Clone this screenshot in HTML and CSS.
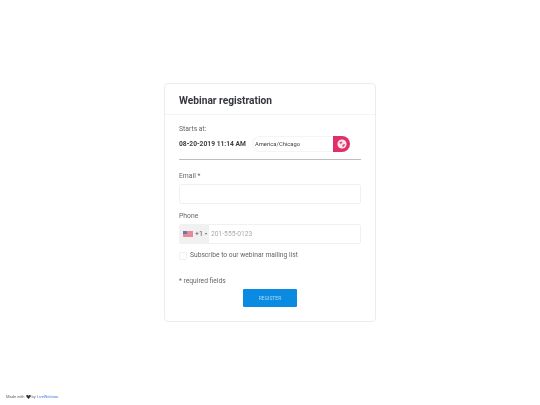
FILE: index.html
```html
<!DOCTYPE html>
<html lang="en">
<head>
<meta charset="utf-8">
<title>Webinar registration</title>
<link rel="stylesheet" href="styles.css">
</head>
<body>
<main class="page">
  <form class="card">
    <h1 class="title">Webinar registration</h1>
    <div class="body">
      <div class="label">Starts at:</div>
      <div class="starts">
        <strong class="date">08-20-2019 11:14 AM</strong>
        <div class="tz">
          <span class="tz-name">America/Chicago</span>
          <span class="tz-btn">
            <svg width="10" height="10" viewBox="0 0 10 10"><circle cx="5" cy="5" r="4.6" fill="#fbe3ea"/><path d="M2.500 3.200 4.600 2.400 5.400 3.600 4.200 4.800 2.800 4.400ZM5.200 6 7.400 5 8 5.800 6.400 8 5.600 7.400Z" fill="#e0406f"/></svg>
          </span>
        </div>
      </div>
      <div class="field">
        <div class="label">Email *</div>
        <div class="input"></div>
      </div>
      <div class="field field-tight">
        <div class="label">Phone</div>
        <div class="input phone">
          <span class="dial">
            <svg class="flag" width="10" height="6" viewBox="0 0 10 6"><rect width="10" height="6" fill="#e58a98"/><rect width="4" height="3" fill="#6a78a8"/></svg>
            <span>+1</span><span class="caret"></span>
          </span>
          <span class="placeholder">201-555-0123</span>
        </div>
      </div>
      <label class="check"><span class="box"></span>Subscribe to our webinar mailing list</label>
      <div class="req">* required fields</div>
      <div class="actions"><span class="btn">REGISTER</span></div>
    </div>
  </form>
</main>
<footer class="foot">Made with <svg class="heart" width="5" height="4" viewBox="0 0 12 10"><path d="M6 10 .8 4.600C-.8 2.400.8 0 3 0c1.300 0 2.400.7 3 1.800C6.600.7 7.700 0 9 0c2.200 0 3.800 2.400 2.200 4.600Z" fill="#333"/></svg> by <a class="link">LiveWebinar</a></footer>
</body>
</html>
```
FILE: styles.css
```css
* { box-sizing: border-box; }
html, body { margin: 0; height: 100%; }
body {
  width: 540px;
  height: 405px;
  position: relative;
  font-family: Roboto, "Liberation Sans", sans-serif;
  color: #444;
  overflow: hidden;
}
.page { padding: 83px 0 0 164px; will-change: transform; }
.card {
  width: 212px;
  height: 239px;
  border: 1px solid #ececef;
  border-radius: 4px;
}
.title {
  margin: 0;
  height: 31px;
  padding: 9px 14px 0;
  font-size: 10.200px;
  line-height: 15px;
  font-weight: 700;
  color: #34373d;
  border-bottom: 1px solid #f4f4f6;
}
.body { padding: 9px 14px 0; }
.label { font-size: 6.800px; line-height: 10px; color: #666; }
.starts {
  display: flex;
  align-items: flex-start;
  height: 24px;
  margin-top: 2px;
  border-bottom: 1px solid #bdbdc0;
}
.date { font-size: 6.700px; line-height: 16px; font-weight: 700; color: #3c3f44; white-space: nowrap; width: 73px; }
.tz { display: flex; height: 16px; width: 98px; }
.tz-name {
  width: 81px;
  border: 1px solid #f4f4f6;
  border-right: 0;
  border-radius: 8px 0 0 8px;
  padding-left: 2px;
  font-size: 5.800px;
  line-height: 14px;
  color: #444;
}
.tz-btn {
  width: 17px;
  background: #e0306a;
  border-radius: 0 8px 8px 0;
  display: flex;
  align-items: center;
  justify-content: center;
}
.field { margin-top: 11px; }
.field-tight { margin-top: 7px; }
.field .label { margin-bottom: 3px; }
.input {
  height: 20px;
  border: 1px solid #f1f1f4;
  border-radius: 2px;
}
.phone { display: flex; align-items: center; }
.dial {
  display: flex;
  align-items: center;
  gap: 2px;
  width: 29px;
  height: 100%;
  padding-left: 3px;
  background: #f1f1f1;
  font-size: 7px;
  color: #555;
}
.caret {
  width: 0;
  height: 0;
  border-left: 1.500px solid transparent;
  border-right: 1.500px solid transparent;
  border-top: 2px solid #666;
}
.placeholder { margin-left: 2px; font-size: 6.700px; color: #aaa; }
.check {
  display: flex;
  align-items: center;
  gap: 3px;
  margin-top: 7px;
  font-size: 6.700px;
  line-height: 9px;
  color: #666;
}
.box { width: 8px; height: 8px; border: 1px solid #f1f1f3; border-radius: 1px; }
.req { margin-top: 17px; font-size: 6.700px; line-height: 9px; color: #666; }
.actions { display: flex; justify-content: center; margin-top: 3px; }
.btn {
  width: 54px;
  height: 18px;
  background: #0a8ae0;
  border-radius: 1px;
  color: #a9d8f6;
  font-size: 5px;
  line-height: 18px;
  text-align: center;
}
.foot {
  position: absolute;
  left: 6px;
  top: 393px;
  font-size: 4px;
  line-height: 7px;
  color: #666;
  white-space: nowrap;
  will-change: transform;
}
.heart { vertical-align: -0.500px; }
.link { color: #4a7be0; }
```
